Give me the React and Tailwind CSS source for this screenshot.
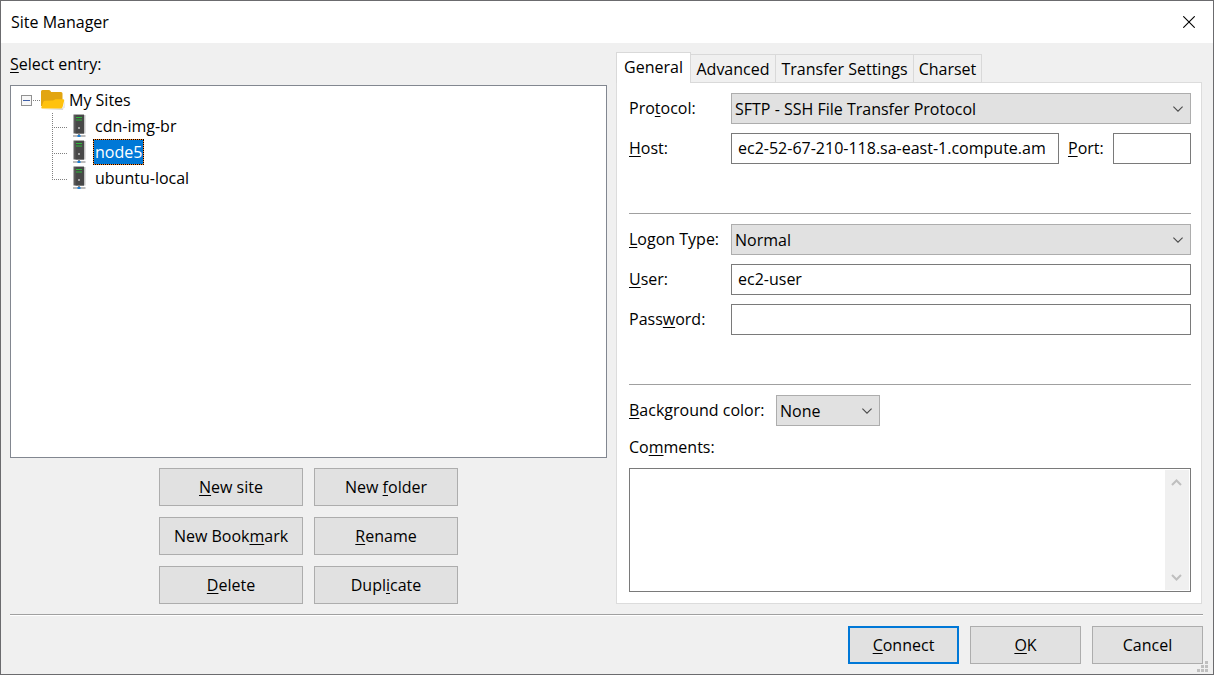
import React from "react";

const U = ({ children }) => <span className="underline decoration-1 underline-offset-2">{children}</span>;

const Chevron = () => (
  <svg className="pointer-events-none absolute right-2 top-1/2 -translate-y-1/2" width="10" height="6" viewBox="0 0 10 6" fill="none" stroke="#4a4a4a" strokeWidth="1.1" aria-hidden="true">
    <path d="M0.4 0.6 L5 5.2 L9.6 0.6" />
  </svg>
);

function Select({ id, value, className }) {
  return (
    <div className={`relative ${className}`}>
      <select id={id} defaultValue={value} className="block h-[31px] w-full appearance-none rounded-none border border-[#adadad] bg-[#e1e1e1] pl-[3px] pr-6 outline-none">
        <option>{value}</option>
      </select>
      <Chevron />
    </div>
  );
}

const fieldClass = "h-[31px] w-full min-w-0 flex-1 border border-[#7a7a7a] bg-white pb-0.5 pl-1.5 outline-none";
const labelClass = "w-[102px] shrink-0 whitespace-nowrap pb-0.5";

function PushButton({ children, className = "w-36", primary }) {
  return (
    <button type="button" className={`h-[38px] bg-[#e1e1e1] text-center ${primary ? "border-2 border-[#0078d7]" : "border border-[#adadad]"} ${className}`}>
      {children}
    </button>
  );
}

const Folder = () => (
  <svg width="24" height="20" viewBox="0 0 24 20" className="shrink-0" aria-hidden="true">
    <path d="M1 19 L22 20 L23.5 10 V18 Z" fill="#d8d8d8" />
    <path d="M0 1.5 Q0 0 1.5 0 H7.5 Q9 0 9.6 1 L10 2 H20 Q21.500 2 21.500 3.500 V16 H0 Z" fill="#e2a511" />
    <path d="M2.500 11.500 Q3 10.800 4 10.800 L12 10.600 L14.500 9.300 H22 Q23.500 9.300 23.200 10.600 L21.600 17 Q21.300 18.500 19.800 18.500 H1.200 Q0 18.500 0.300 17.200 Z" fill="#ffc20e" />
  </svg>
);

const Server = () => (
  <svg width="14" height="24" viewBox="0 0 14 24" className="shrink-0" aria-hidden="true">
    <rect x="11" y="1" width="1.500" height="18.500" fill="#c4c4c4" />
    <rect x="0.500" y="0.500" width="10.500" height="19" fill="#5c5c5c" />
    <rect x="2.500" y="1" width="8.500" height="18.500" fill="#484848" />
    <path d="M3 3.500 H9 M3 6 H9" stroke="#2fb83a" strokeWidth="1.200" />
    <circle cx="6" cy="14" r="1" fill="#c4c4c4" />
    <rect x="5" y="19.500" width="2" height="2" fill="#8b8b8b" />
    <path d="M0 22 H12.500" stroke="#a4a4a4" strokeWidth="1.500" />
    <rect x="4.500" y="21" width="3" height="2" fill="#1c7fd6" />
  </svg>
);

const Expander = () => (
  <svg width="20" height="12" viewBox="0 0 20 12" className="shrink-0" aria-hidden="true">
    <rect x="0.500" y="1.500" width="10" height="10" fill="#f7f7f7" stroke="#919191" />
    <path d="M2 6.500 H9" stroke="#3f5fa8" />
    <path d="M12 6.500 H20" stroke="#808080" strokeDasharray="1 1" />
  </svg>
);

const Branch = ({ last }) => (
  <svg width="16" height="26" viewBox="0 0 16 26" className="shrink-0" aria-hidden="true">
    <path d={last ? "M0.500 0 V14" : "M0.500 0 V26"} stroke="#808080" strokeDasharray="1 1" />
    <path d="M0 14.500 H16" stroke="#808080" strokeDasharray="1 1" />
  </svg>
);

const sites = ["cdn-img-br", "node5", "ubuntu-local"];

function SiteTree() {
  return (
    <ul role="tree" aria-labelledby="entry-label" className="min-h-0 flex-1 border border-[#828790] bg-white pt-px">
      <li role="treeitem" aria-expanded="true">
        <div className="flex h-[26px] items-center pl-2.5">
          <Expander />
          <Folder />
          <span className="pl-1">My Sites</span>
        </div>
        <ul role="group">
          {sites.map((name, i) => (
            <li key={name} role="treeitem" aria-selected={name === "node5"} className="flex h-[26px] items-center pl-[41px]">
              <Branch last={i === sites.length - 1} />
              <span className="pl-[5px]"><Server /></span>
              <span className={`ml-1.5 flex h-[26px] border ${name === "node5" ? "border-dotted border-black bg-[#ff8728]" : "border-transparent"}`}>
                <span className={`flex items-center px-px ${name === "node5" ? "bg-[#0078d7] text-white" : ""}`}>{name}</span>
              </span>
            </li>
          ))}
        </ul>
      </li>
    </ul>
  );
}

const tabClass = "-ml-px h-[29px] border border-[#d9d9d9] bg-[#f0f0f0] text-center whitespace-nowrap";

function Tabs() {
  return (
    <div role="tablist" className="z-10 -mb-px flex items-end">
      <button type="button" role="tab" aria-selected="true" className="h-[31px] w-[75px] border border-b-0 border-[#d9d9d9] bg-white pb-0.5 text-center">General</button>
      <button type="button" role="tab" aria-selected="false" className={`${tabClass} w-[86px]`}>Advanced</button>
      <button type="button" role="tab" aria-selected="false" className={`${tabClass} w-[139px]`}>Transfer Settings</button>
      <button type="button" role="tab" aria-selected="false" className={`${tabClass} w-[69px]`}>Charset</button>
    </div>
  );
}

function GeneralPanel() {
  return (
    <div role="tabpanel" className="flex flex-1 flex-col border border-[#dcdcdc] bg-white pr-2.5 pl-3 pt-2.5 pb-[11px]">
      <div className="flex flex-col gap-[9px]">
        <div className="flex items-center">
          <label htmlFor="protocol" className={labelClass}>Pro<U>t</U>ocol:</label>
          <Select id="protocol" value="SFTP - SSH File Transfer Protocol" className="flex-1" />
        </div>
        <div className="flex items-center">
          <label htmlFor="host" className={labelClass}><U>H</U>ost:</label>
          <input id="host" type="text" defaultValue="ec2-52-67-210-118.sa-east-1.compute.am" className={fieldClass} />
          <label htmlFor="port" className="w-[54px] shrink-0 pb-0.5 pl-[9px]"><U>P</U>ort:</label>
          <div className="flex w-[78px]"><input id="port" type="text" className={fieldClass} /></div>
        </div>
      </div>
      <hr className="mt-[49px] border-[#a0a0a0]" />
      <div className="mt-2.5 flex flex-col gap-[9px]">
        <div className="flex items-center">
          <label htmlFor="logon" className={labelClass}><U>L</U>ogon Type:</label>
          <Select id="logon" value="Normal" className="flex-1" />
        </div>
        <div className="flex items-center">
          <label htmlFor="user" className={labelClass}><U>U</U>ser:</label>
          <input id="user" type="text" defaultValue="ec2-user" className={fieldClass} />
        </div>
        <div className="flex items-center">
          <label htmlFor="password" className={labelClass}>Pass<U>w</U>ord:</label>
          <input id="password" type="password" className={fieldClass} />
        </div>
      </div>
      <hr className="mt-[49px] border-[#a0a0a0]" />
      <div className="mt-2.5 flex items-center">
        <label htmlFor="background" className="w-[147px] shrink-0 whitespace-nowrap pb-0.5"><U>B</U>ackground color:</label>
        <Select id="background" value="None" className="w-[104px]" />
      </div>
      <label htmlFor="comments" className="mt-2.5">Co<U>m</U>ments:</label>
      <div className="mt-2.5 flex min-h-[124px] flex-1 border border-[#7a7a7a] p-px">
        <textarea id="comments" className="min-w-0 flex-1 resize-none bg-white px-1.5 outline-none" />
        <div className="flex w-6 flex-col items-center justify-between bg-[#f0f0f0] py-2 pr-0.5" aria-hidden="true">
          <svg width="11" height="9" viewBox="0 0 11 9" fill="none" stroke="#bfbfbf" strokeWidth="2"><path d="M1 7 L5.500 2.500 L10 7" /></svg>
          <svg width="11" height="9" viewBox="0 0 11 9" fill="none" stroke="#bfbfbf" strokeWidth="2"><path d="M1 2 L5.500 6.500 L10 2" /></svg>
        </div>
      </div>
    </div>
  );
}

export default function App() {
  return (
    <div className="relative flex min-h-screen flex-col border border-[#6b6b6e] bg-[#f0f0f0] font-['Open_Sans',sans-serif] text-[16px] leading-[22px] text-black">
      <header className="flex h-[42px] items-center justify-between bg-white pl-2.5 pr-[18px]">
        <h1>Site Manager</h1>
        <button type="button" aria-label="Close">
          <svg width="12" height="12" viewBox="0 0 12 12" stroke="#000" strokeWidth="1.100" aria-hidden="true"><path d="M0.300 0.300 L11.700 11.700 M11.700 0.300 L0.300 11.700" /></svg>
        </button>
      </header>

      <main className="grid flex-1 grid-cols-[597fr_586fr] gap-x-[9px] pl-[9px] pr-[11px] pt-[9px] pb-2.5">
        <section className="flex min-w-0 flex-col">
          <div id="entry-label" className="mt-px h-8"><U>S</U>elect entry:</div>
          <SiteTree />
          <div className="mt-2.5 grid grid-cols-[144px_144px] justify-center gap-[11px]">
            <PushButton><U>N</U>ew site</PushButton>
            <PushButton>New <U>f</U>older</PushButton>
            <PushButton>New Book<U>m</U>ark</PushButton>
            <PushButton><U>R</U>ename</PushButton>
            <PushButton><U>D</U>elete</PushButton>
            <PushButton>Dupl<U>i</U>cate</PushButton>
          </div>
        </section>
        <section className="flex min-w-0 flex-col">
          <Tabs />
          <GeneralPanel />
        </section>
      </main>

      <footer className="ml-[9px] mr-2.5 flex justify-end gap-[11px] border-t border-[#a0a0a0] pb-2.5 pt-[11px] shadow-[inset_0_1px_0_#fff]">
        <PushButton className="w-[111px]" primary><U>C</U>onnect</PushButton>
        <PushButton className="w-[111px]"><U>O</U>K</PushButton>
        <PushButton className="w-[111px]">Cancel</PushButton>
      </footer>

      <svg className="absolute bottom-0.5 right-[5px]" width="11" height="11" viewBox="0 0 11 11" fill="#bfbfbf" aria-hidden="true">
        <path d="M8 0h3v3h-3z M4 4h3v3h-3z M8 4h3v3h-3z M0 8h3v3h-3z M4 8h3v3h-3z M8 8h3v3h-3z" />
      </svg>
    </div>
  );
}
